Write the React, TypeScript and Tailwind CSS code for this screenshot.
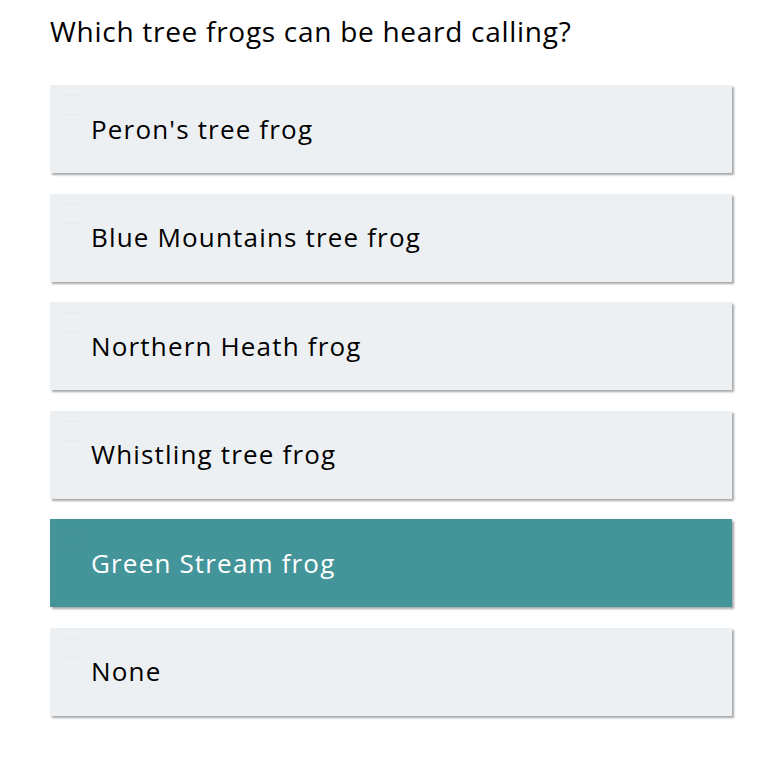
import React, { useState } from 'react';

const options = [
  "Peron's tree frog",
  'Blue Mountains tree frog',
  'Northern Heath frog',
  'Whistling tree frog',
  'Green Stream frog',
  'None',
];

export default function App() {
  const [selected, setSelected] = useState<number>(4);

  return (
    <div className="min-h-[758px] bg-white px-[50px] pt-[12px] font-['Open_Sans',sans-serif] text-black tracking-[0.045em]">
      <h1 className="text-[28px] leading-[39px] font-normal">Which tree frogs can be heard calling?</h1>

      <div className="mt-[34px] flex w-[682px] flex-col gap-[20.6px]">
        {options.map((label, i) => {
          const active = selected === i;
          return (
            <button
              key={label}
              onClick={() => setSelected(i)}
              className={`relative flex h-[88px] items-center pl-[41px] text-left text-[26px] tracking-[0.045em] shadow-[2px_2px_2px_rgba(0,0,0,0.35)] ${active ? 'bg-[#43959a] text-white' : 'bg-[#edf0f3] text-black'}`}
            >
              {/* faint checkbox ghost */}
              <span className={`absolute left-[8px] top-[10px] h-[20px] w-[25px] rounded-[2px] border ${active ? 'border-black/[0.03]' : 'border-black/[0.02]'}`}></span>
              {label}
            </button>
          );
        })}
      </div>
    </div>
  );
}
